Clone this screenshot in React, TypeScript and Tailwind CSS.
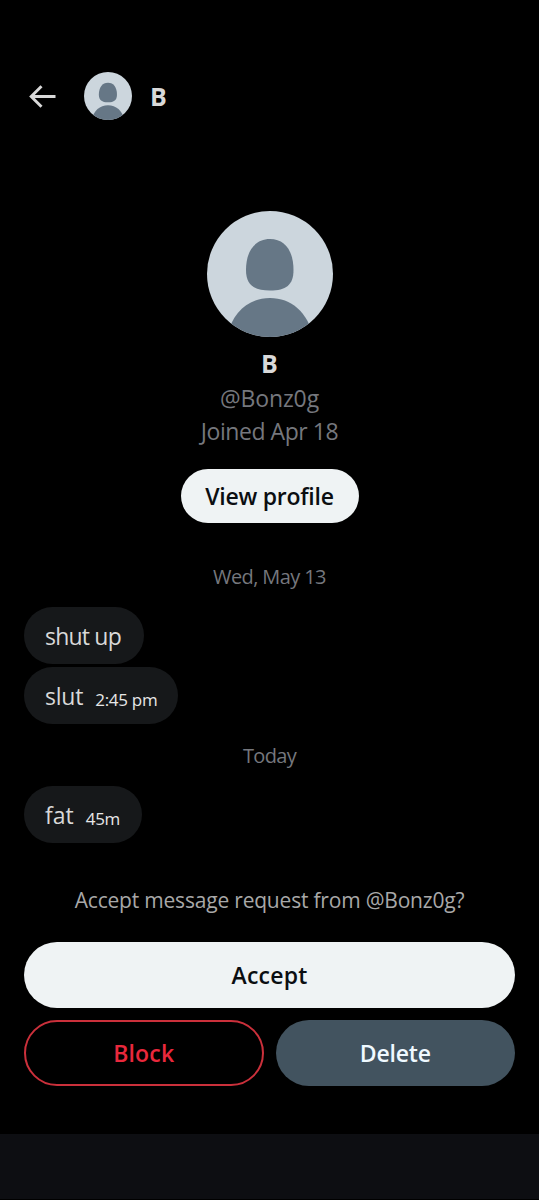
import type { ReactNode } from "react";

function Avatar({ className }: { className: string }) {
  return (
    <svg viewBox="0 0 126 126" className={`shrink-0 rounded-full ${className}`} aria-hidden="true">
      <rect width="126" height="126" fill="#ccd6dd" />
      <path
        d="M63 28C48 28 39 40 39 59C39 74 47 79.500 63 79.500C79 79.500 86.500 74 86.500 59C86.500 40 78 28 63 28Z"
        fill="#667786"
      />
      <path d="M20 126C25 101 42 87 63 87S101 101 106 126Z" fill="#667786" />
    </svg>
  );
}

function Bubble({ children, time, className }: { children: ReactNode; time?: string; className: string }) {
  return (
    <div className={`flex h-[57px] items-center rounded-full bg-[#16181a] pt-px pl-[21px] text-[23px] text-[#d9d9d9] ${className}`}>
      <span>{children}</span>
      {time && <span className="mt-[7px] ml-3 text-[17px] tracking-[-0.3px] text-[#e7e7e7]">{time}</span>}
    </div>
  );
}

export default function App() {
  return (
    <div className="flex h-[1200px] w-[539px] flex-col overflow-hidden whitespace-nowrap bg-black font-['Open_Sans',sans-serif] text-[#d9d9d9]">
      <header className="mt-[72px] flex h-12 shrink-0 items-center pl-[29px]">
        <svg viewBox="0 0 27 24" className="h-6 w-[27px]" fill="none" stroke="#d9d9d9" strokeWidth="2.900" aria-label="Back">
          <path d="M26.500 12.500H2.500M12.500 2.200L2.200 12.500L12.500 22.800" />
        </svg>
        <Avatar className="ml-7 size-12" />
        <span className="mt-px ml-[18px] text-[25px] font-bold">B</span>
      </header>

      <section className="mt-[91.4px] flex shrink-0 flex-col items-center">
        <Avatar className="size-[126px]" />
        <h1 className="mt-[9px] text-[25px] leading-[34px] font-bold">B</h1>
        <p className="mt-[1.6px] text-[23px] leading-[33px] tracking-[-0.1px] text-[#75777d]">@Bonz0g</p>
        <p className="text-[23px] leading-[33px] tracking-[-0.45px] text-[#75777d]">Joined Apr 18</p>
        <button className="mt-[21px] h-[54px] w-[178px] rounded-full bg-[#eff3f4] text-[23px] font-semibold tracking-[-0.25px] text-[#0b0e11]">
          View profile
        </button>
      </section>

      <main className="flex shrink-0 flex-col px-6">
        <p className="mt-[40px] text-center text-[20px] leading-[28px] tracking-[-0.6px] text-[#75777d]">Wed, May 13</p>
        <div className="mt-4 flex flex-col gap-[3px]">
          <Bubble className="w-[120px] tracking-[-0.8px]">shut up</Bubble>
          <Bubble className="w-[154px] tracking-[-0.2px]" time="2:45 pm">slut</Bubble>
        </div>
        <p className="mt-[18px] text-center text-[20px] leading-[28px] tracking-[-0.7px] text-[#75777d]">Today</p>
        <div className="mt-4 flex">
          <Bubble className="w-[118px]" time="45m">fat</Bubble>
        </div>
      </main>

      <footer className="flex shrink-0 flex-col px-6">
        <p className="mt-[42px] text-center text-[21px] leading-[30px] tracking-[-0.2px] text-[#a8a8a8]">Accept message request from @Bonz0g?</p>
        <button className="mt-[27.5px] h-[66px] rounded-full bg-[#eff3f4] text-[23px] font-semibold tracking-[0.2px] text-[#0b0e11]">Accept</button>
        <div className="mt-3 grid grid-cols-2 gap-3">
          <button className="h-[66px] rounded-full border-2 border-[#cb303b] text-[23px] font-semibold tracking-[0.2px] text-[#e9283c]">Block</button>
          <button className="h-[66px] rounded-full bg-[#42535f] text-[23px] font-semibold tracking-[-0.2px] text-[#eff9ff]">Delete</button>
        </div>
      </footer>

      <div className="mt-auto h-[66px] shrink-0 border-b border-black bg-[#0d0e12]" />
    </div>
  );
}
